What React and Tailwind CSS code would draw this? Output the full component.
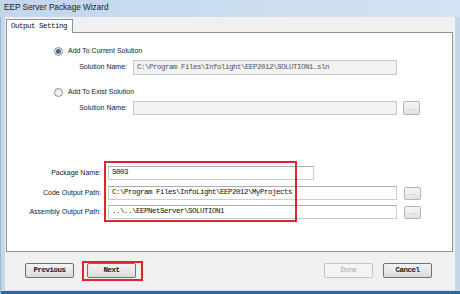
const sans = { fontFamily: '"Liberation Sans", Arial, sans-serif' };

const Radio = ({ checked }) => (
  <span className="w-[9px] h-[9px] rounded-full border border-[#8f8f8f] bg-gradient-to-br from-[#e4e4e4] to-[#fbfbfb] flex items-center justify-center shrink-0">
    {checked && (
      <span className="w-[5px] h-[5px] rounded-full bg-gradient-to-br from-[#2b4566] to-[#6f8fb8]" />
    )}
  </span>
);

const TextBox = ({ value, disabled, width, height = "h-[15px]" }) => (
  <div
    className={`${width} ${height} border flex items-center px-[3px] font-['Liberation_Mono',monospace] text-[7.5px] tracking-[-0.5px] whitespace-nowrap overflow-hidden ${
      disabled
        ? "bg-[#f2f2f2] border-[#c8c8c8] text-[#555]"
        : "bg-white border-[#c9ced6] border-t-[#a9adb5] text-[#111]"
    }`}
  >
    {value}
  </div>
);

const DotsButton = ({ height = "h-[14px]" }) => (
  <div className={`w-[17px] ${height} border border-[#b4b4b4] rounded-[2px] bg-gradient-to-b from-[#f6f6f6] to-[#e2e2e2] flex items-center justify-center text-[7px] leading-none text-[#9a9a9a] pb-[2px]`}>
    ...
  </div>
);

const WizButton = ({ label, disabled }) => (
  <div
    className={`w-[49px] h-[15px] rounded-[2px] border flex items-center justify-center font-['Liberation_Mono',monospace] text-[7.5px] tracking-[-0.5px] font-bold ${
      disabled
        ? "border-[#c4c4c4] bg-[#f4f4f4] text-[#a8a8a8] font-normal"
        : "border-[#707070] bg-gradient-to-b from-[#f4f4f4] to-[#dadada] text-[#1a1a1a]"
    }`}
  >
    {label}
  </div>
);

const App = () => {
  return (
    <div className="w-[460px] h-[294px] flex flex-col bg-[#c3d7ed] overflow-hidden" style={sans}>
      {/* title bar */}
      <div className="h-[17px] shrink-0 flex items-center pl-[4px] bg-gradient-to-r from-[#c2d6ec] to-[#d3e3f3] text-[8.2px] text-[#1b1b1b]">
        EEP Server Package Wizard
      </div>

      <div className="flex-1 flex flex-col pl-[4px] pr-[5px] border-l border-l-[#9db5d2]">
        <div className="flex-1 flex flex-col bg-[#f0f0f0]">
          {/* tab strip */}
          <div className="h-[16px] shrink-0 flex items-end pl-[1px] pr-[2px]">
            <div className="w-[67px] h-[14px] bg-white border border-b-0 border-[#8e9091] flex items-center pl-[4px] font-['Liberation_Mono',monospace] text-[7.5px] tracking-[-0.5px] text-[#111]">
              Output Setting
            </div>
            <div className="flex-1 border-b border-[#8e9091]" />
          </div>

          {/* panel */}
          <div className="relative h-[219px] shrink-0 mx-[1px] mr-[2px] bg-white border border-t-0 border-[#8e9091] flex flex-col text-[7px] text-[#222]">
            <div className="mt-[13px] h-[10px] flex items-center gap-[5px] pl-[47px]">
              <Radio checked />
              <span>Add To Current Solution</span>
            </div>
            <div className="mt-[4px] flex items-center gap-[6px]">
              <span className="w-[120px] text-right">Solution Name:</span>
              <TextBox value="C:\Program Files\Infolight\EEP2012\SOLUTION1.sln" disabled width="w-[264px]" />
            </div>

            <div className="mt-[12px] h-[10px] flex items-center gap-[5px] pl-[47px]">
              <Radio />
              <span>Add To Exist Solution</span>
            </div>
            <div className="mt-[4px] flex items-center gap-[6px]">
              <span className="w-[120px] text-right">Solution Name:</span>
              <TextBox value="" disabled width="w-[264px]" height="h-[14px]" />
              <DotsButton />
            </div>

            <div className="mt-[51px] flex items-center gap-[7px]">
              <span className="w-[94px] text-right">Package Name:</span>
              <TextBox value="S003" width="w-[206px]" height="h-[14px]" />
            </div>
            <div className="mt-[6px] flex items-center gap-[7px]">
              <span className="w-[94px] text-right">Code Output Path:</span>
              <TextBox value="C:\Program Files\InfoLight\EEP2012\MyProjects" width="w-[289px]" height="h-[14px]" />
              <DotsButton height="h-[13px]" />
            </div>
            <div className="mt-[5px] flex items-center gap-[7px]">
              <span className="w-[94px] text-right">Assembly Output Path:</span>
              <TextBox value="..\..\EEPNetServer\SOLUTION1" width="w-[289px]" height="h-[14px]" />
              <DotsButton height="h-[13px]" />
            </div>

            {/* highlight */}
            <div className="absolute left-[97px] top-[128px] w-[193px] h-[61px] border-2 border-[#e0242c]" />
          </div>

          {/* buttons */}
          <div className="flex-1 flex items-start pt-[11px] pl-[20px] pr-[23px]">
            <WizButton label="Previous" />
            <div className="relative ml-[13px]">
              <WizButton label="Next" />
              <div className="absolute left-[-5px] right-[-7px] top-[-2px] bottom-[-3px] border-2 border-[#e0242c]" />
            </div>
            <div className="flex-1" />
            <WizButton label="Done" disabled />
            <div className="ml-[10px]">
              <WizButton label="Cancel" />
            </div>
          </div>
        </div>
        <div className="h-[4px] shrink-0 -mx-[4px] -mr-[5px] bg-[#d2e1f1] border-b-[3px] border-[#30659e]" />
      </div>
    </div>
  );
};

export default App;
